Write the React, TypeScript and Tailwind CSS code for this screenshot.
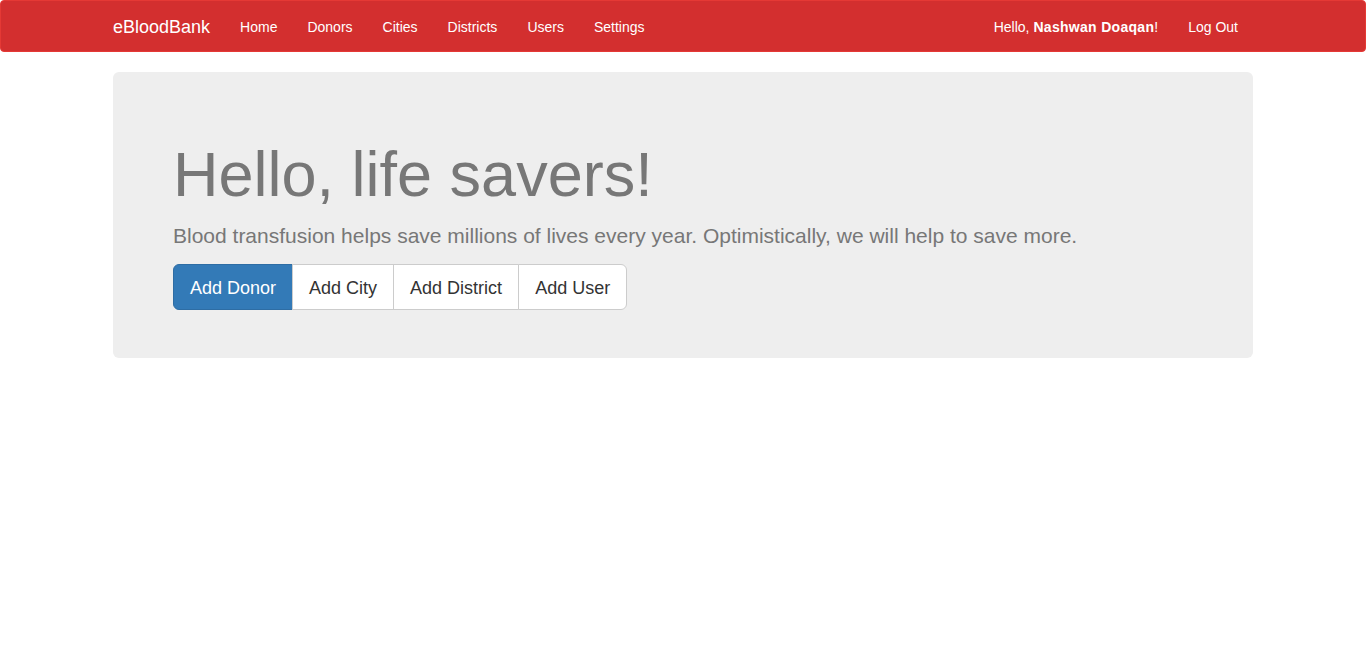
export default function App() {
  const links = ["Home", "Donors", "Cities", "Districts", "Users", "Settings"]
  const actions = ["Add City", "Add District", "Add User"]

  return (
    <div className="min-h-screen bg-white font-['Liberation_Sans',Arial,sans-serif] text-[14px] text-[#333]">
      <header className="mb-5 h-[52px] rounded border border-[#e53935] bg-[#d32f2f]">
        <nav className="mx-auto flex h-[50px] w-[1140px] items-center justify-between pt-0.5">
          <div className="flex items-center">
            <a className="pr-[15px] text-[18px] leading-5 text-white">eBloodBank</a>
            {links.map((l) => (
              <a key={l} className="px-[15px] leading-5 text-white">
                {l}
              </a>
            ))}
          </div>
          <div className="flex items-center pr-[15px]">
            <span className="px-[15px] leading-5 text-white">
              Hello, <b className="tracking-[0.3px]">Nashwan Doaqan</b>!
            </span>
            <a className="pl-[15px] leading-5 text-white">Log Out</a>
          </div>
        </nav>
      </header>

      <main className="mx-auto w-[1140px]">
        <section className="rounded-md bg-[#eee] px-[60px] py-12 text-[#777]">
          <h1 className="mt-5 mb-2.5 text-[63px] leading-[1.1]">Hello, life savers!</h1>
          <p className="mb-[13px] pt-0.5 text-[21px] leading-[30px]">
            Blood transfusion helps save millions of lives every year. Optimistically, we will help to save more.
          </p>
          <div className="flex">
            <button className="h-[46px] rounded-l-md border border-[#2e6da4] bg-[#337ab7] px-4 pt-0.5 text-[18px] text-white">
              Add Donor
            </button>
            {actions.map((a, i) => (
              <button
                key={a}
                className={`-ml-px h-[46px] border border-[#ccc] bg-white px-4 pt-0.5 text-[18px] text-[#333] ${
                  i === actions.length - 1 ? "rounded-r-md" : ""
                }`}
              >
                {a}
              </button>
            ))}
          </div>
        </section>
      </main>
    </div>
  )
}
